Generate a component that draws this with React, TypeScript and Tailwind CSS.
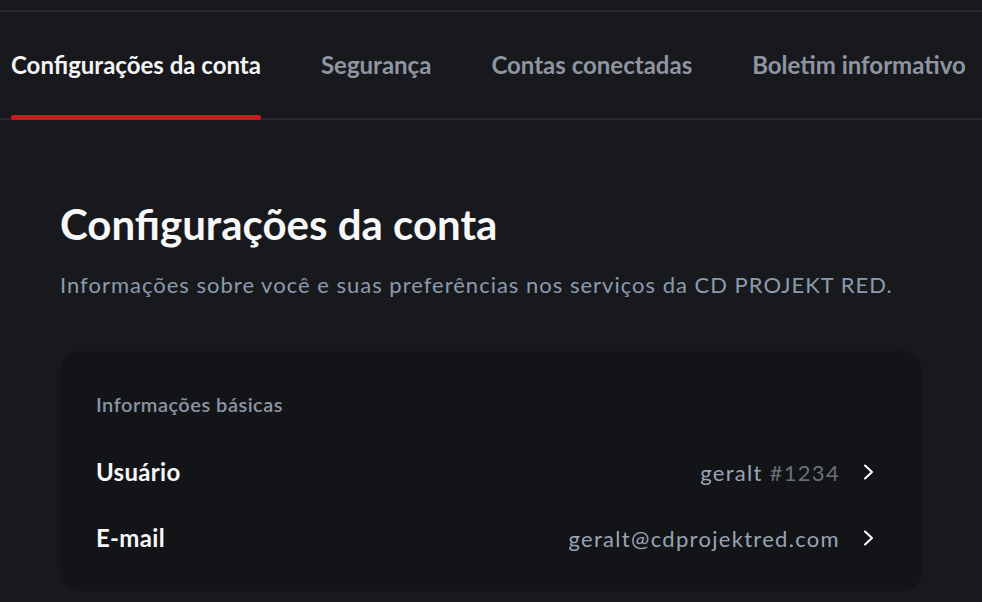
import { useState } from 'react';

const tabs = ['Configurações da conta', 'Segurança', 'Contas conectadas', 'Boletim informativo'];

function Chevron() {
    return (
        <svg width="14" height="16" viewBox="0 0 14 16" fill="none" className="shrink-0">
            <path d="M3 1.5 L10 8 L3 14.5" stroke="#ffffff" strokeWidth="2" strokeLinecap="round" strokeLinejoin="round" />
        </svg>
    );
}

function Row({ label, children }: { label: string; children: React.ReactNode }) {
    return (
        <div className="flex items-center justify-between h-[66px]">
            <span className="text-[24px] font-bold tracking-[0.3px] text-[#f7f7f8]">{label}</span>
            <div className="flex items-center gap-[22px]">
                <span className="text-[22px] tracking-[1.3px] text-[#98a4b4]">{children}</span>
                <Chevron />
            </div>
        </div>
    );
}

export default function App() {
    const [active, setActive] = useState(0);

    return (
        <div className="min-h-screen w-full bg-[#18191d] font-['Lato','Noto_Sans',sans-serif] overflow-hidden">
            <div className="h-[10px]" />
            <nav className="border-t-2 border-b-2 border-[#27282c] h-[110px] flex items-stretch gap-[60px] pl-[11px] whitespace-nowrap">
                {tabs.map((t, i) => (
                    <button
                        key={t}
                        onClick={() => setActive(i)}
                        className={`relative flex items-center text-[24px] font-bold ${i === active ? 'text-[#f4f4f5]' : 'text-[#8e95a1]'}`}
                    >
                        {t}
                        {i === active && (
                            <span className="absolute left-0 right-0 bottom-[-2px] h-[5px] rounded-full bg-[#d7141a]" />
                        )}
                    </button>
                ))}
            </nav>

            <main className="px-[60px] pt-[79px]">
                <h1 className="text-[42px] font-bold text-[#f7f7f8] leading-[50px]">Configurações da conta</h1>
                <p className="mt-[22px] text-[22px] tracking-[1px] text-[#8b9bae] leading-[28px] whitespace-nowrap">
                    Informações sobre você e suas preferências nos serviços da CD PROJEKT RED.
                </p>

                <section className="mt-[52px] w-[862px] rounded-[20px] bg-[#131417] pl-[36px] pr-[46px] pt-[39px] pb-[20px]">
                    <h2 className="text-[20px] font-semibold tracking-[0.5px] text-[#8b95a3] leading-[28px] mb-[21px]">Informações básicas</h2>
                    <Row label="Usuário">
                        geralt <span className="text-[#6c7077]">#1234</span>
                    </Row>
                    <Row label="E-mail">geralt@cdprojektred.com</Row>
                </section>
            </main>
        </div>
    );
}
